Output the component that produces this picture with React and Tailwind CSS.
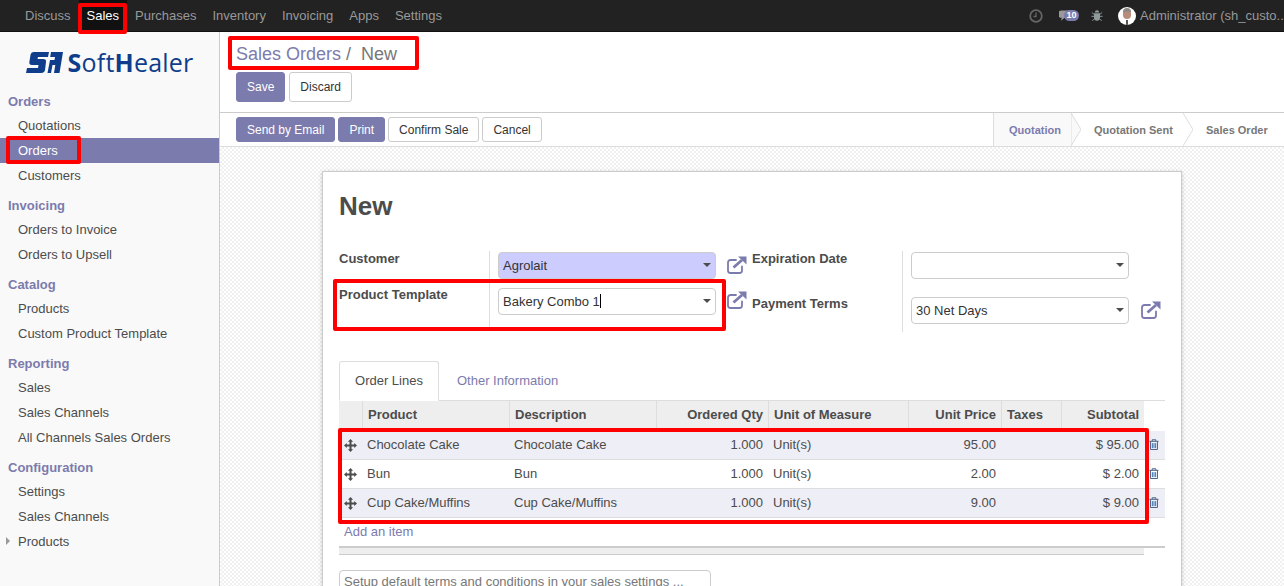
import React from "react";

const F = "font-['Liberation_Sans',Arial,sans-serif]";

const Menu = ["Discuss", "Sales", "Purchases", "Inventory", "Invoicing", "Apps", "Settings"];

function Ext({ className = "" }) {
  return (
    <svg viewBox="0 0 20 18" className={"w-[20px] h-[18px] " + className} fill="none" stroke="#7c7bad" strokeWidth="1.800">
      <path d="M15 10.500v4A2.500 2.500 0 0 1 12.500 17h-9A2.500 2.500 0 0 1 1 14.500v-8A2.500 2.500 0 0 1 3.500 4H9" strokeLinecap="round" />
      <path d="M6.500 11.500 15 4" strokeWidth="2.800" />
      <path d="M11 0.500H19.500V8.500Z" fill="#7c7bad" stroke="none" />
    </svg>
  );
}

function Caret() {
  return <span className="absolute right-[4px] top-[10px] w-0 h-0 border-x-[4px] border-x-transparent border-t-[4px] border-t-[#4c4c4c]" />;
}

function Select({ value, cursor, bg = "bg-white", className = "" }) {
  return (
    <div className={`relative w-[218px] h-[27px] rounded-[4px] border border-[#ccc] pl-[4px] leading-[25px] text-[13px] text-[#333] ${bg} ${className}`}>
      {value}
      {cursor && <span className="inline-block w-px h-[14px] bg-black align-[-2px]" />}
      <Caret />
    </div>
  );
}

function Move() {
  return (
    <svg viewBox="0 0 14 14" className="w-[13px] h-[13px]" fill="#4c4c4c">
      <path d="M7 0l2.800 3H8.100v2.900H11V4.200L14 7l-3 2.800V8.100H8.100V11h1.700L7 14l-2.800-3h1.700V8.100H3v1.700L0 7l3-2.800v1.700h2.900V3H4.200z" />
    </svg>
  );
}

function Trash() {
  return (
    <svg viewBox="0 0 11 12" className="w-[10px] h-[11px] mt-[-2px]" fill="none" stroke="#4f6488" strokeWidth="1.100">
      <path d="M0.500 2.500h10M3.500 2.500V0.800h4v1.700M1.700 2.500v9h7.600v-9" />
      <path d="M3.700 4.500v5.500M5.500 4.500v5.500M7.300 4.500v5.500" stroke="#3f74b0" />
    </svg>
  );
}

const cols = "grid-cols-[23px_147px_147px_112px_140px_93px_60px_83px]";

const rows = [
  ["Chocolate Cake", "95.00", "$ 95.00", "bg-[#eeeef6]"],
  ["Bun", "2.00", "$ 2.00", "bg-white"],
  ["Cup Cake/Muffins", "9.00", "$ 9.00", "bg-[#eeeef6]"],
];

function Section({ title, items }) {
  return (
    <div className="mb-[5px]">
      <div className="h-[24px] pl-[8px] leading-[25px] text-[13px] font-bold text-[#7c7bad]">{title}</div>
      {items.map((i) => (
        <div
          key={i.label}
          className={`relative h-[25px] pl-[18px] leading-[25px] text-[13px] ${i.active ? "bg-[#7c7bad] text-white" : "text-[#4c4c4c]"}`}
        >
          {i.caret && <span className="absolute left-[6px] top-[8px] w-0 h-0 border-y-[4px] border-y-transparent border-l-[4px] border-l-[#999]" />}
          {i.label}
        </div>
      ))}
    </div>
  );
}

function Btn({ children, primary, className = "" }) {
  return (
    <div
      className={`rounded-[3px] border px-[10px] text-[12px] flex items-center ${primary ? "bg-[#7c7bad] border-[#7c7bad] text-white" : "bg-white border-[#ccc] text-[#333]"} ${className}`}
    >
      {children}
    </div>
  );
}

function Redbox({ className }) {
  return <div className={"absolute border-[4px] border-[#ff0000] rounded-[2px] pointer-events-none " + className} />;
}

export default function App() {
  return (
    <div className={`relative w-[1284px] h-[586px] overflow-hidden bg-white ${F}`}>
      {/* top bar */}
      <div className="h-[32px] bg-[#222] border-b border-[#111] flex items-center text-[13px] text-[#999] pl-[17px]">
        {Menu.map((m) => (
          <div key={m} className={`h-[31px] px-[8px] leading-[31px] ${m === "Sales" ? "bg-[#111] text-white" : ""}`}>
            {m}
          </div>
        ))}
        <div className="ml-auto flex items-center">
          <svg viewBox="0 0 14 14" className="w-[14px] h-[14px] mr-[16px]" fill="none" stroke="#666" strokeWidth="1.800">
            <circle cx="7" cy="7" r="5.800" />
            <path d="M7 3.500V7.500H4.500" strokeWidth="1.300" />
          </svg>
          <div className="relative w-[20px] h-[12px] mr-[12px]">
            <svg viewBox="0 0 14 12" className="absolute left-0 top-0 w-[13px] h-[12px]" fill="#999">
              <path d="M3 0h8a3 3 0 0 1 0 8H6L2 11l1-3a4 4 0 0 1 0-8z" />
            </svg>
            <span className="absolute left-[5px] top-0 w-[15px] h-[11px] rounded-full bg-[#7c7bad] text-white text-[9px] font-bold leading-[11px] text-center">10</span>
          </div>
          <svg viewBox="0 0 14 14" className="w-[12px] h-[13px] mr-[15px]" fill="#8f9a9a">
            <path d="M4.500 3.500a2.500 2.500 0 0 1 5 0zM3.500 4.500h7v5a3.500 3.500 0 0 1-7 0z" />
            <path d="M3.500 5.500 1 3.500M10.500 5.500 13 3.500M3.500 8H.5M10.500 8h3M4 11l-2.500 2M10 11l2.500 2" stroke="#8f9a9a" strokeWidth="1.100" />
          </svg>
          <div className="relative w-[18px] h-[18px] rounded-full bg-white overflow-hidden mr-[4px]">
            <span className="absolute left-[5px] top-[2px] w-[8px] h-[10px] rounded-full bg-[#b98d7c]" />
            <span className="absolute left-[5px] top-[1px] w-[8px] h-[4px] rounded-t-full bg-[#8d8a88]" />
            <span className="absolute left-[8px] top-[13px] w-[2px] h-[5px] bg-[#555]" />
          </div>
          <span className="w-[144px] whitespace-nowrap">Administrator (sh_custo..</span>
        </div>
      </div>

      <div className="flex h-[554px]">
        {/* sidebar */}
        <div className="w-[220px] shrink-0 bg-[#f9f9f9] border-r border-[#ccc]">
          <div className="h-[57px] flex items-center justify-center pt-[4px]">
            <svg viewBox="0 0 37 21" className="w-[37px] h-[21px] mr-[5px]" fill="#0f3d8c">
              <path d="M8 0H23L22 5H12L11.500 7H17Q20.500 7 20 10L19 18Q18.500 21 15 21H0L1 16H12L12.500 13H6Q2.500 13 3.500 9L4.500 3Q5 0 8 0Z" />
              <path d="M25 0H37L33.500 21H28L29.300 13H26.500L25 21H21.500L24 8H28.500L29 5H24.200Z" />
            </svg>
            <span className="font-['Open_Sans',sans-serif] text-[25px] leading-none text-[#0f3d8c] tracking-[0.2px]">
              <b className="font-bold">S</b>of<span>t</span><b className="font-bold">H</b>ealer
            </span>
          </div>
          <Section title="Orders" items={[{ label: "Quotations" }, { label: "Orders", active: true }, { label: "Customers" }]} />
          <Section title="Invoicing" items={[{ label: "Orders to Invoice" }, { label: "Orders to Upsell" }]} />
          <Section title="Catalog" items={[{ label: "Products" }, { label: "Custom Product Template" }]} />
          <Section title="Reporting" items={[{ label: "Sales" }, { label: "Sales Channels" }, { label: "All Channels Sales Orders" }]} />
          <Section title="Configuration" items={[{ label: "Settings" }, { label: "Sales Channels" }, { label: "Products", caret: true }]} />
        </div>

        {/* main */}
        <div className="flex-1 min-w-0 flex flex-col">
          <div className="h-[81px] shrink-0 bg-white border-b border-[#ccc] pl-[16px]">
            <div className="h-[40px] pt-[9px] text-[18px] leading-[26px] text-[#777]">
              <span className="text-[#7c7bad]">Sales Orders</span> /&nbsp; New
            </div>
            <div className="flex gap-[4px] h-[30px]">
              <Btn primary className="px-[10px]">Save</Btn>
              <Btn>Discard</Btn>
            </div>
          </div>

          <div className="h-[34px] shrink-0 bg-white border-b border-[#ddd] pl-[16px] flex items-center">
            <div className="flex gap-[3px] h-[25px]">
              <Btn primary>Send by Email</Btn>
              <Btn primary>Print</Btn>
              <Btn>Confirm Sale</Btn>
              <Btn>Cancel</Btn>
            </div>
            <div className="ml-auto self-stretch flex text-[11px] font-bold text-[#777] border-l border-[#ddd]">
              <div className="relative w-[79px] bg-[#f9f9f9] text-[#7c7bad] flex items-center pl-[15px] pt-[2px]">
                Quotation
                <svg viewBox="0 0 10 33" className="absolute right-[-8px] top-0 w-[10px] h-[33px] z-[1]" preserveAspectRatio="none">
                  <path d="M0 0L10 16.500L0 33Z" fill="#f9f9f9" stroke="#ddd" />
                </svg>
              </div>
              <div className="relative w-[111px] flex items-center pl-[21px] pt-[2px]">
                Quotation Sent
                <svg viewBox="0 0 10 33" className="absolute right-[-9px] top-0 w-[10px] h-[33px] z-[1]" preserveAspectRatio="none">
                  <path d="M0 0L10 16.500L0 33" fill="white" stroke="#ddd" />
                </svg>
              </div>
              <div className="w-[100px] flex items-center pl-[22px] pt-[2px]">Sales Order</div>
            </div>
          </div>

          {/* sheet */}
          <div className="flex-1 min-h-0 overflow-hidden bg-[#f9f9f9] bg-[repeating-conic-gradient(#f0f0f0_0%_25%,#ffffff_0%_50%)] bg-[length:4px_4px] pl-[102px] pt-[24px]">
            <div className="w-[860px] h-[500px] bg-white border border-[#ccc] shadow-[0_1px_4px_rgba(0,0,0,0.2)] px-[16px]">
              <div className="h-[67px] pt-[17px] text-[26px] font-bold leading-[34px] text-[#4c4c4c]">New</div>

              <div className="flex h-[92px] mt-[12px]">
                <div className="w-[151px] h-[80px] border-r border-[#ddd]">
                  <div className="h-[36px] text-[13px] font-bold text-[#4c4c4c] leading-[15px]">Customer</div>
                  <div className="text-[13px] font-bold text-[#4c4c4c] leading-[15px]">Product Template</div>
                </div>
                <div className="w-[262px] pl-[8px]">
                  <div className="flex items-start h-[36px]">
                    <Select value="Agrolait" bg="bg-[#ccccff]" className="mt-[1px]" />
                    <Ext className="ml-[11px] mt-[5px]" />
                  </div>
                  <div className="flex items-start">
                    <Select value="Bakery Combo 1" cursor className="mt-[1px]" />
                    <Ext className="ml-[11px] mt-[4px]" />
                  </div>
                </div>
                <div className="w-[150px] text-[13px] font-bold text-[#4c4c4c] leading-[15px]">
                  <div className="h-[45px]">Expiration Date</div>
                  <div>Payment Terms</div>
                </div>
                <div className="border-l border-[#ddd] pl-[8px] h-[81px]">
                  <Select value="" className="mt-[1px]" />
                  <div className="flex items-start mt-[18px]">
                    <Select value="30 Net Days" />
                    <Ext className="ml-[12px] mt-[4px]" />
                  </div>
                </div>
              </div>

              {/* tabs */}
              <div className="mt-[18px] h-[40px] flex border-b border-[#ddd] text-[13px]">
                <div className="h-[40px] w-[100px] border border-[#ddd] border-b-white rounded-t-[3px] bg-white text-[#4c4c4c] text-center leading-[38px]">Order Lines</div>
                <div className="pl-[18px] text-[#7c7bad] leading-[39px]">Other Information</div>
              </div>

              {/* table */}
              <div className="w-[826px] text-[13px] text-[#4c4c4c]">
                <div className={`grid ${cols} w-[805px] h-[30px] bg-[#eee] font-bold leading-[27px] border-b border-[#ddd]`}>
                  <div />
                  <div className="border-l border-[#ddd] pl-[5px]">Product</div>
                  <div className="border-l border-[#ddd] pl-[5px]">Description</div>
                  <div className="border-l border-[#ddd] pr-[5px] text-right">Ordered Qty</div>
                  <div className="border-l border-[#ddd] pl-[5px]">Unit of Measure</div>
                  <div className="border-l border-[#ddd] pr-[5px] text-right">Unit Price</div>
                  <div className="border-l border-[#ddd] pl-[5px]">Taxes</div>
                  <div className="border-l border-[#ddd] pr-[5px] text-right">Subtotal</div>
                </div>
                {rows.map(([n, p, s, bg]) => (
                  <div key={n} className={`flex h-[29px] leading-[28px] border-b border-[#ddd] ${bg}`}>
                    <div className={`grid ${cols} w-[805px]`}>
                      <div className="flex items-center pl-[5px]"><Move /></div>
                      <div className="pl-[5px]">{n}</div>
                      <div className="pl-[5px]">{n}</div>
                      <div className="pr-[5px] text-right">1.000</div>
                      <div className="pl-[5px]">Unit(s)</div>
                      <div className="pr-[5px] text-right">{p}</div>
                      <div />
                      <div className="pr-[5px] text-right">{s}</div>
                    </div>
                    <div className="flex items-center pl-[5px]"><Trash /></div>
                  </div>
                ))}
                <div className="h-[28px] pl-[5px] leading-[28px] text-[#7c7bad]">Add an item</div>
                <div className="border-t-2 border-[#ccc]">
                  <div className="w-[805px] h-[7px] bg-[#eee] border-b border-[#ccc]" />
                </div>
              </div>

              <div className="mt-[15px] w-[372px] h-[27px] rounded-[4px] border border-[#ccc] pl-[4px] leading-[21px] text-[13px] text-[#777]">
                Setup default terms and conditions in your sales settings ...
              </div>
            </div>
          </div>
        </div>
      </div>

      {/* red annotation boxes */}
      <Redbox className="left-[78px] top-[3px] w-[49px] h-[31px]" />
      <Redbox className="left-[228px] top-[36px] w-[191px] h-[34px]" />
      <Redbox className="left-[6px] top-[136px] w-[75px] h-[28px]" />
      <Redbox className="left-[333px] top-[279px] w-[393px] h-[52px]" />
      <Redbox className="left-[338px] top-[428px] w-[811px] h-[96px]" />
    </div>
  );
}
